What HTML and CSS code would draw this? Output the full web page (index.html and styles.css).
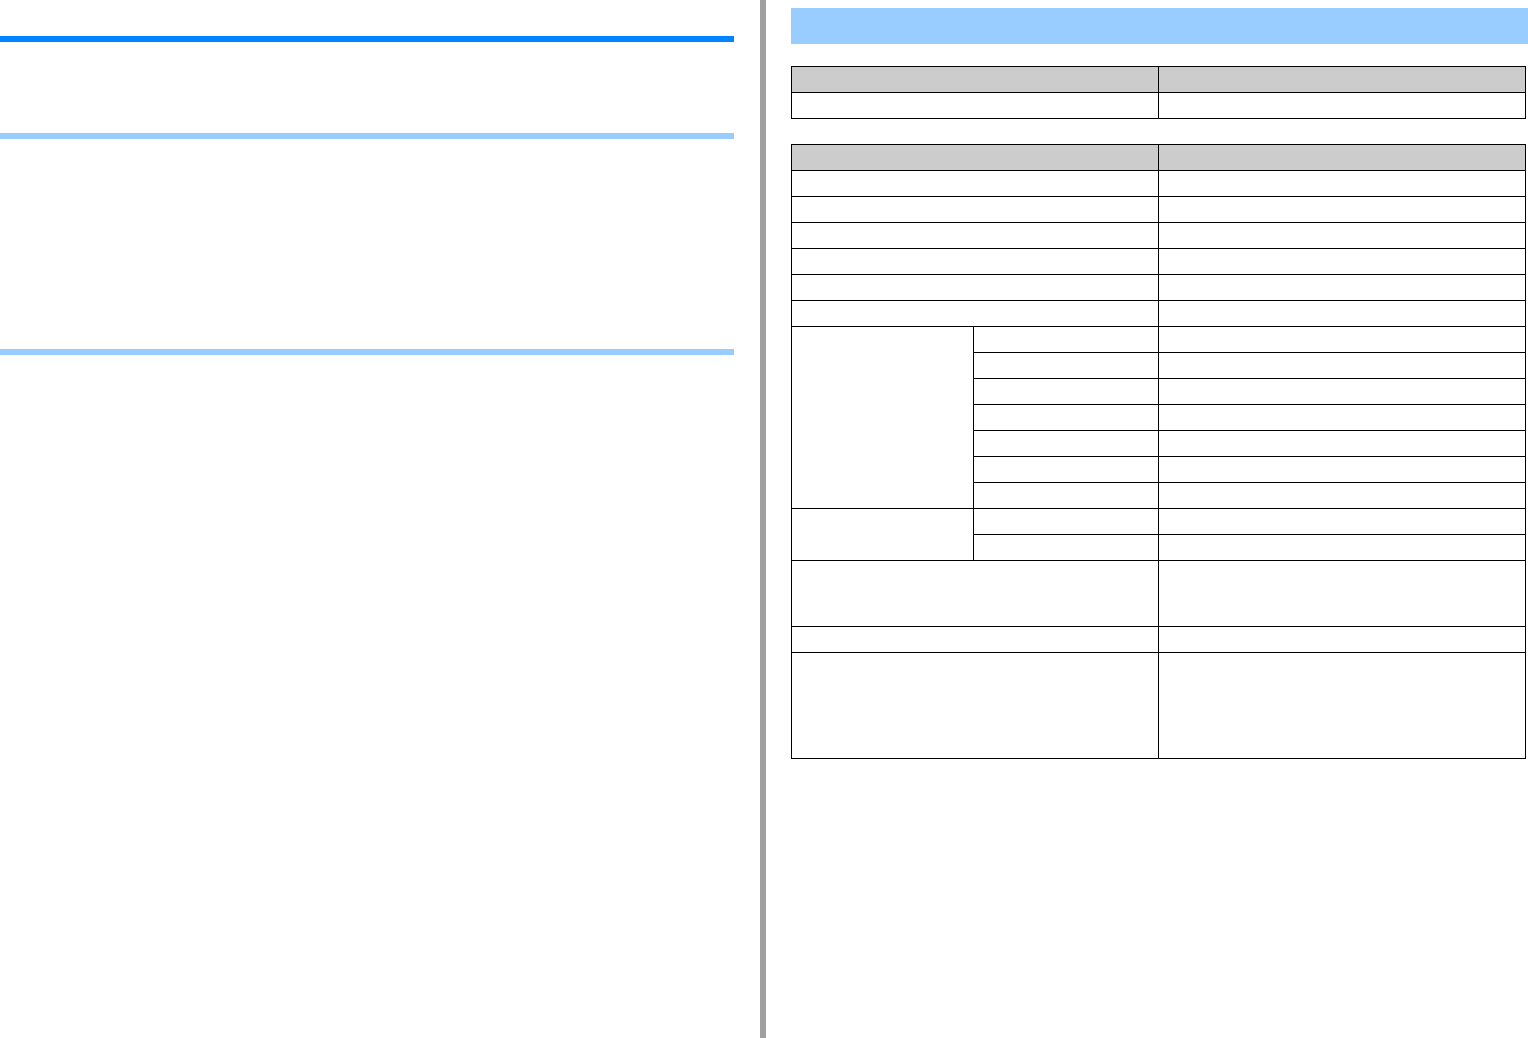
FILE: index.html
```html
<!DOCTYPE html>
<html lang="en">
<head>
<meta charset="UTF-8">
<meta name="viewport" content="width=device-width, initial-scale=1.0">
<title>Specifications</title>
<link rel="stylesheet" href="styles.css">
</head>
<body>

<div class="spread">
    <!-- Left page: section rules only -->
    <div class="page page-left">
        <div class="rule rule-main"></div>
        <div class="rule rule-sub rule-first"></div>
        <div class="rule rule-sub rule-second"></div>
    </div>

    <div class="divider"></div>

    <!-- Right page: heading band and spec tables -->
    <div class="page page-right">
        <div class="band"></div>

        <table class="spec spec-small">
            <colgroup>
                <col class="col-half">
                <col class="col-half">
            </colgroup>
            <thead>
                <tr><th></th><th></th></tr>
            </thead>
            <tbody>
                <tr><td></td><td></td></tr>
            </tbody>
        </table>

        <table class="spec spec-large">
            <colgroup>
                <col class="col-group">
                <col class="col-sub">
                <col class="col-half">
            </colgroup>
            <thead>
                <tr><th colspan="2"></th><th></th></tr>
            </thead>
            <tbody>
                <tr><td colspan="2"></td><td></td></tr>
                <tr><td colspan="2"></td><td></td></tr>
                <tr><td colspan="2"></td><td></td></tr>
                <tr><td colspan="2"></td><td></td></tr>
                <tr><td colspan="2"></td><td></td></tr>
                <tr><td colspan="2"></td><td></td></tr>

                <tr><td rowspan="7"></td><td></td><td></td></tr>
                <tr><td></td><td></td></tr>
                <tr><td></td><td></td></tr>
                <tr><td></td><td></td></tr>
                <tr><td></td><td></td></tr>
                <tr><td></td><td></td></tr>
                <tr><td></td><td></td></tr>

                <tr><td rowspan="2"></td><td></td><td></td></tr>
                <tr><td></td><td></td></tr>

                <tr class="row-3"><td colspan="2"></td><td></td></tr>
                <tr><td colspan="2"></td><td></td></tr>
                <tr class="row-5"><td colspan="2"></td><td></td></tr>
            </tbody>
        </table>
    </div>
</div>

</body>
</html>
```

FILE: styles.css
```css
body {
    margin: 0;
    font-family: "Liberation Sans", Arial, sans-serif;
    background-color: #fff;
}
.spread {
    display: flex;
    min-height: 1038px;
}
.page-left {
    width: 734px;
}
.rule {
    height: 6px;
}
.rule-main {
    margin-top: 36px;
    background-color: #0084ff;
}
.rule-sub {
    background-color: #99ccff;
}
.rule-first {
    margin-top: 91px;
}
.rule-second {
    margin-top: 210px;
}
.divider {
    width: 6px;
    margin-left: 26px;
    background-color: #a0a0a0;
}
.page-right {
    width: 737px;
    margin-left: 25px;
    padding-top: 8px;
}
.band {
    height: 36px;
    background-color: #99ccff;
}
.spec {
    width: 735px;
    border-collapse: collapse;
    table-layout: fixed;
}
.spec-small {
    margin-top: 22px;
}
.spec-large {
    margin-top: 25px;
}
.col-half {
    width: 367px;
}
.col-group {
    width: 182px;
}
.col-sub {
    width: 185px;
}
th, td {
    border: 1px solid #000;
    padding: 0;
    height: 25px;
}
th {
    background-color: #ccc;
}
.row-3 td {
    height: 65px;
}
.row-5 td {
    height: 105px;
}
```
